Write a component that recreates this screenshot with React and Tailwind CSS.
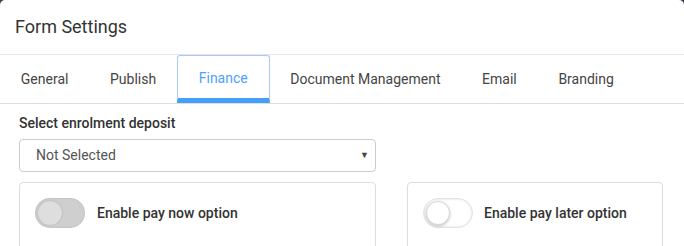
import React from "react";

const tabs = ["General", "Publish", "Finance", "Document Management", "Email", "Branding"];

function Toggle({ on }) {
  if (on) {
    return (
      <div className="relative w-[50px] h-[30px] rounded-full bg-[#cfcfcf] shadow-[inset_0_0_2px_rgba(0,0,0,0.15)] shrink-0">
        <div className="absolute left-[3px] top-[3px] w-[24px] h-[24px] rounded-full bg-[#dedede] shadow-[0_0_2px_rgba(0,0,0,0.2)]" />
      </div>
    );
  }
  return (
    <div className="relative w-[50px] h-[30px] rounded-full bg-white border border-[#e2e2e2] shadow-[inset_0_0_3px_rgba(0,0,0,0.12)] shrink-0">
      <div className="absolute left-[2px] top-[2px] w-[24px] h-[24px] rounded-full bg-white border border-[#d8d8d8] shadow-[0_1px_3px_rgba(0,0,0,0.25)]" />
    </div>
  );
}

export default function App() {
  return (
    <div className="w-[684px] h-[246px] bg-[#3c3c4c] overflow-hidden" style={{ fontFamily: "Roboto, 'Liberation Sans', sans-serif" }}>
      <div className="bg-white h-full rounded-t-[5px]">
        <div className="h-[55px] px-[15px] flex items-center border-b border-[#e5e5e5]">
          <h1 className="text-[18px] text-[#333] font-normal leading-none">Form Settings</h1>
        </div>
        <div className="h-[49px] flex items-stretch border-b border-[#dddddd]">
          {tabs.map((t) =>
            t === "Finance" ? (
              <div key={t} className="px-[20.8px] flex items-center text-[14px] text-[#4da0ff] border border-[#a9c9fb] border-b-[5px] border-b-[#44a0f7] rounded-t-[3px] pt-[2px]">
                {t}
              </div>
            ) : (
              <div key={t} className="px-[20.8px] flex items-center text-[14px] text-[#444]">
                {t}
              </div>
            )
          )}
        </div>
        <div className="px-[19px]">
          <div className="pt-[11px] text-[14px] font-medium text-[#333] leading-[17px]">Select enrolment deposit</div>
          <div className="mt-[7px] w-[357px] h-[33px] border border-[#cccccc] rounded-[4px] flex items-center justify-between pl-[16px] pr-[6px] text-[14px] text-[#555]">
            <span>Not Selected</span>
            <span className="text-[9px] text-[#444]">▼</span>
          </div>
          <div className="mt-[10px] flex gap-[31px]">
            <div className="w-[357px] h-[80px] border border-[#dddddd] rounded-[4px] px-[15px] pt-[15px] flex items-start">
              <div className="flex items-center gap-[12px]">
                <Toggle on />
                <span className="text-[14px] font-medium text-[#333]">Enable pay now option</span>
              </div>
            </div>
            <div className="w-[256px] h-[80px] border border-[#dddddd] rounded-[4px] px-[15px] pt-[15px] flex items-start">
              <div className="flex items-center gap-[11px]">
                <Toggle />
                <span className="text-[14px] font-medium text-[#333]">Enable pay later option</span>
              </div>
            </div>
          </div>
        </div>
      </div>
    </div>
  );
}
